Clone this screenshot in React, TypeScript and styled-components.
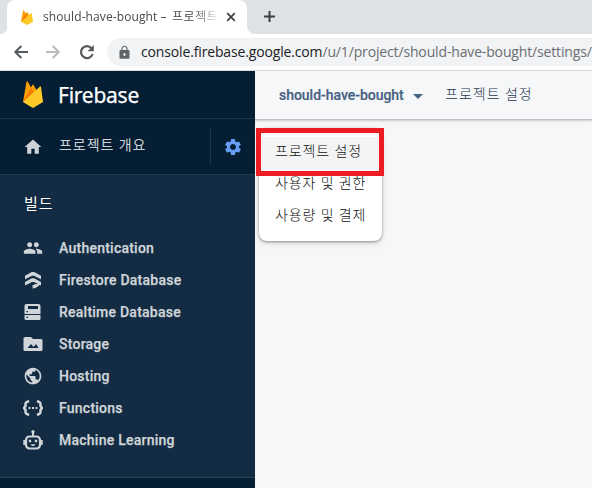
import React from "react";
import styled, { createGlobalStyle } from "styled-components";
import { MdHome, MdSettings, MdPeople, MdPublic, MdLock, MdArrowDropDown } from "react-icons/md";

const GlobalStyle = createGlobalStyle`
  * { box-sizing: border-box; }
  body { margin: 0; overflow: hidden; background: #f6f7f9; }
  svg { display: block; flex: none; }
`;

const ui = `"Open Sans", "Noto Sans CJK KR", sans-serif`;
const roboto = `Roboto, "Noto Sans CJK KR", sans-serif`;

const Window = styled.div`
  width: 592px;
  height: 488px;
  display: flex;
  flex-direction: column;
  overflow: hidden;
`;

const TabStrip = styled.div`
  height: 34px;
  flex: none;
  display: flex;
  background: #dee1e6;
`;

const TabCurve = styled.div<{ $side: "left" | "right" }>`
  width: 8px;
  height: 8px;
  align-self: flex-end;
  background: radial-gradient(circle at ${(p) => (p.$side === "left" ? "0 0" : "100% 0")}, #dee1e6 7.5px, #fff 8.5px);
`;

const Tab = styled.div`
  width: 240px;
  margin-left: -1px;
  padding-left: 14px;
  display: flex;
  align-items: center;
  background: #fff;
  border-radius: 8px 8px 0 0;
`;

const TabTitle = styled.div`
  width: 176px;
  margin-left: 10px;
  white-space: nowrap;
  font: 12px/20px ${ui};
  letter-spacing: 0.1px;
  color: #45494d;
  mask-image: linear-gradient(to right, #000 148px, transparent 178px);
`;

const TabClose = styled.div`
  margin-left: 7px;
`;

const NewTab = styled.div`
  margin: 10px 0 0 8px;
`;

const TabHangul = styled.span`
  margin-left: 2px;
  letter-spacing: 0.6px;
`;

const Toolbar = styled.div`
  height: 37px;
  flex: none;
  display: flex;
  padding: 4px 0 0 13px;
  background: #fff;
  border-bottom: 1px solid #d9dbdf;
`;

const NavButtons = styled.div`
  width: 94px;
  height: 28px;
  display: flex;
  align-items: center;
  gap: 16px;
`;

const AddressBar = styled.div`
  flex: 1;
  height: 28px;
  padding-left: 10px;
  display: flex;
  align-items: center;
  background: #f1f3f4;
  border-radius: 14px 0 0 14px;
  overflow: hidden;
`;

const Url = styled.div`
  margin-left: 9px;
  white-space: nowrap;
  font: 14px/28px ${ui};
  letter-spacing: -0.15px;
  color: #6b6e72;
`;

const Host = styled.span`
  color: #202124;
`;

const Body = styled.div`
  flex: 1;
  display: flex;
  min-height: 0;
`;

const Sidebar = styled.nav`
  width: 255px;
  flex: none;
  display: flex;
  flex-direction: column;
  background: #132c43;
`;

const Brand = styled.div`
  height: 48px;
  padding-left: 23px;
  display: flex;
  align-items: center;
  background: #051e34;
  border-bottom: 1px solid #1e3549;
`;

const BrandName = styled.span`
  margin: 1px 0 0 15px;
  font: 400 21px/26px "Noto Sans", sans-serif;
  letter-spacing: -0.25px;
  -webkit-text-stroke: 0.25px currentColor;
  color: #fff;
`;

const Overview = styled.div`
  height: 56px;
  padding-left: 23px;
  display: flex;
  align-items: center;
  background: #051e34;
  border-bottom: 1px solid #20374b;
  color: #cdd2d6;
`;

const OverviewText = styled.span`
  width: 151px;
  margin: -3px 0 0 16px;
  font: 14px/20px ${roboto};
  letter-spacing: 0.95px;
`;

const GearCell = styled.div`
  height: 36px;
  padding-left: 12px;
  display: flex;
  align-items: center;
  border-left: 1px solid #20374b;
  color: #669df6;
`;

const SectionTitle = styled.div`
  height: 57px;
  padding: 17px 0 0 24px;
  font: 15px/24px ${roboto};
  letter-spacing: 1px;
  color: #fff;
`;

const NavItem = styled.div`
  height: 32px;
  padding-left: 23px;
  display: flex;
  align-items: center;
  gap: 16px;
  color: #d0d5d9;
  font: 500 14px/20px ${roboto};
`;

const NavLabel = styled.span`
  letter-spacing: 0.24px;
  -webkit-text-stroke: 0.25px currentColor;
`;

const SidebarFooter = styled.div`
  height: 11px;
  margin-top: auto;
  background: #051e34;
  border-top: 1px solid #2b4257;
`;

const Main = styled.main`
  flex: 1;
  min-width: 0;
  background: #f6f7f9;
`;

const Header = styled.header`
  height: 49px;
  padding-left: 24px;
  display: flex;
  align-items: center;
  border-bottom: 1px solid #bfc0c3;
  box-shadow: 0 1px 2px #00000030;
`;

const ProjectName = styled.span`
  width: 127px;
  white-space: nowrap;
  font: 500 14px/20px ${roboto};
  letter-spacing: -0.03px;
  color: #476282;
  -webkit-text-stroke: 0.2px currentColor;
`;

const PageName = styled.span`
  margin: -3px 0 0 15px;
  font: 300 14px/20px ${roboto};
  letter-spacing: 1px;
  color: #1c344c;
`;

const CaretBox = styled.div`
  color: #476282;
  padding-top: 2px;
`;

const MenuAnchor = styled.div`
  position: relative;
`;

const Menu = styled.div`
  position: absolute;
  left: 4px;
  top: 8px;
  width: 123px;
  height: 113px;
  padding-top: 9px;
  background: #fff;
  border-radius: 8px;
  box-shadow: 0 1px 3px #00000068, 0 3px 8px #00000014;
`;

const MenuItem = styled.div<{ $active?: boolean }>`
  height: 32px;
  padding-left: 16px;
  font: 300 14px/28px ${roboto};
  letter-spacing: 0.9px;
  white-space: nowrap;
  color: #111;
  background: ${(p) => (p.$active ? "#f4f4f4" : "transparent")};
`;

const Highlight = styled.div`
  position: absolute;
  left: 1px;
  top: 8px;
  width: 128px;
  height: 48px;
  border: 5px solid #ed1c24;
`;

const Flame = ({ width, height }: { width: number; height: number }) => (
  <svg width={width} height={height} viewBox="0 0 20 27" preserveAspectRatio="none">
    <path d="M0 21 3.5.7Q4-.4 4.8.7L8 6.500 9.400 4q.6-.8 1.200 0L20 21Z" fill="#ffa000" />
    <path d="M0 21 8 6.500 12 13Z" fill="#f57c00" />
    <path d="M0 21 17 5.600q.8-.7 1 .3L20 21l-9 5.500q-1 .5-2 0Z" fill="#ffca28" />
  </svg>
);

const Arrow = ({ back }: { back?: boolean }) => (
  <svg width="16" height="16" viewBox="0 0 16 16" fill="none" stroke={back ? "#55595e" : "#b9bbbe"} strokeWidth="2">
    <path d={back ? "M15 8H2.500M8.300 2 2.300 8l6 6" : "M1 8h12.500M7.700 2l6 6-6 6"} />
  </svg>
);

const ReloadIcon = () => (
  <svg width="20" height="20" viewBox="0 0 20 20">
    <path d="M14.600 6.200A6 6 0 1 0 15.700 12" fill="none" stroke="#55595e" strokeWidth="2.200" />
    <path d="M16.800 3v6.300h-6.300Z" fill="#55595e" />
  </svg>
);

const FirestoreIcon = () => (
  <svg width="20" height="20" viewBox="0 0 20 20" fill="currentColor">
    <path d="M2 5.800 8.800 2h2.400L18 5.800v3.400L11 5.800H9L2 9.200ZM2 12 8.800 8.200h2.400L18 12v3.400L11 12H9L2 15.400ZM9 15.800l3.500-1.800 5 .3-2 1.700-3.500 2.200H9l1-1.200Z" />
  </svg>
);

const DatabaseIcon = () => (
  <svg width="20" height="20" viewBox="0 0 20 20" fill="currentColor" fillRule="evenodd">
    <path d="M3.500 2h12A2 2 0 0 1 17.500 4v8h-16V4A2 2 0 0 1 3.500 2ZM5 4v3h10V4ZM3.500 9v1.200H5V9ZM1.500 13h16v3.500a1.500 1.500 0 0 1-1.500 1.500H3A1.500 1.500 0 0 1 1.500 16.500Zm2 1.800V16H5v-1.200Z" />
  </svg>
);

const StorageIcon = () => (
  <svg width="20" height="20" viewBox="0 0 20 20" fill="currentColor" fillRule="evenodd">
    <path d="M2 3h6l2 2h8a1.500 1.500 0 0 1 1.500 1.500v9A1.500 1.500 0 0 1 18 17H2a1.500 1.500 0 0 1-1.500-1.500v-11A1.500 1.500 0 0 1 2 3Zm2.500 11h11L13 10l-2.500 3L8 10Z" />
  </svg>
);

const FunctionsIcon = () => (
  <svg width="20" height="20" viewBox="0 0 20 20" fill="none" stroke="currentColor" strokeWidth="2.500">
    <path d="M6 3 3.700 4Q2.500 4.700 2.500 6v2L1 10l1.500 2v2q0 1.300 1.200 2L6 17M14 3l2.300 1q1.200.7 1.200 2v2l1.500 2-1.500 2v2q0 1.300-1.200 2L14 17" />
    <path d="M5.500 10h2M9 10h2M12.500 10h2" strokeWidth="2" />
  </svg>
);

const RobotIcon = () => (
  <svg width="20" height="20" viewBox="0 0 20 20" fill="none" stroke="currentColor">
    <rect x="3" y="6.500" width="14" height="12" rx="3.500" strokeWidth="2.200" />
    <path d="M10 2v4M1.300 10v5M18.700 10v5" strokeWidth="2" />
    <circle cx="10" cy="1.800" r="1.700" fill="currentColor" stroke="none" />
    <path d="M5.800 11h2.400M11.800 11h2.400" strokeWidth="2.500" />
    <path d="M7.500 14.200h5L11 16H9Z" fill="currentColor" stroke="none" />
  </svg>
);

const products = [
  { label: "Authentication", icon: <MdPeople size={20} /> },
  { label: "Firestore Database", icon: <FirestoreIcon /> },
  { label: "Realtime Database", icon: <DatabaseIcon /> },
  { label: "Storage", icon: <StorageIcon /> },
  { label: "Hosting", icon: <MdPublic size={20} /> },
  { label: "Functions", icon: <FunctionsIcon /> },
  { label: "Machine Learning", icon: <RobotIcon /> },
];

export default function App() {
  return (
    <Window>
      <GlobalStyle />
      <TabStrip>
        <TabCurve $side="left" />
        <Tab>
          <Flame width={12} height={15} />
          <TabTitle>
            should-have-bought – <TabHangul>프로젝트</TabHangul>
          </TabTitle>
          <TabClose>
            <svg width="10" height="10" viewBox="0 0 10 10" stroke="#3c4043" strokeWidth="1.700">
              <path d="m1.200 1.200 7.600 7.600m0-7.600L1.200 8.800" />
            </svg>
          </TabClose>
        </Tab>
        <TabCurve $side="right" />
        <NewTab>
          <svg width="13" height="13" viewBox="0 0 13 13" stroke="#3c4043" strokeWidth="2">
            <path d="M6.500 1v11M1 6.500h11" />
          </svg>
        </NewTab>
      </TabStrip>
      <Toolbar>
        <NavButtons>
          <Arrow back />
          <Arrow />
          <ReloadIcon />
        </NavButtons>
        <AddressBar>
          <MdLock size={15} color="#5f6368" />
          <Url>
            <Host>console.firebase.google.com</Host>/u/1/project/should-have-bought/settings/
          </Url>
        </AddressBar>
      </Toolbar>
      <Body>
        <Sidebar>
          <Brand>
            <Flame width={20} height={27} />
            <BrandName>Firebase</BrandName>
          </Brand>
          <Overview>
            <MdHome size={20} />
            <OverviewText>프로젝트 개요</OverviewText>
            <GearCell>
              <MdSettings size={20} />
            </GearCell>
          </Overview>
          <SectionTitle>빌드</SectionTitle>
          {products.map((p) => (
            <NavItem key={p.label}>
              {p.icon}
              <NavLabel>{p.label}</NavLabel>
            </NavItem>
          ))}
          <SidebarFooter />
        </Sidebar>
        <Main>
          <Header>
            <ProjectName>should-have-bought</ProjectName>
            <CaretBox>
              <MdArrowDropDown size={24} />
            </CaretBox>
            <PageName>프로젝트 설정</PageName>
          </Header>
          <MenuAnchor>
            <Menu>
              <MenuItem $active>프로젝트 설정</MenuItem>
              <MenuItem>사용자 및 권한</MenuItem>
              <MenuItem>사용량 및 결제</MenuItem>
            </Menu>
            <Highlight />
          </MenuAnchor>
        </Main>
      </Body>
    </Window>
  );
}
